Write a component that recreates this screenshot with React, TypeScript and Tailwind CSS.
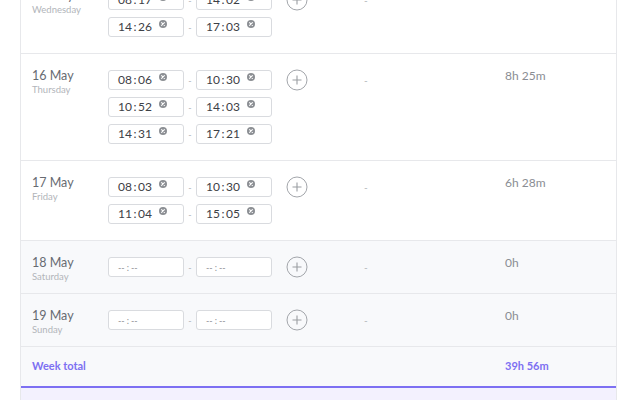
import React from "react";

type Day = {
  date: string;
  day: string;
  times: [string, string][];
  total: string;
  weekend?: boolean;
};

const days: Day[] = [
  { date: "15 May", day: "Wednesday", times: [["08:17", "14:02"], ["14:26", "17:03"]], total: "8h 22m" },
  { date: "16 May", day: "Thursday", times: [["08:06", "10:30"], ["10:52", "14:03"], ["14:31", "17:21"]], total: "8h 25m" },
  { date: "17 May", day: "Friday", times: [["08:03", "10:30"], ["11:04", "15:05"]], total: "6h 28m" },
  { date: "18 May", day: "Saturday", times: [["", ""]], total: "0h", weekend: true },
  { date: "19 May", day: "Sunday", times: [["", ""]], total: "0h", weekend: true },
];

function ClearIcon() {
  return (
    <svg width="8" height="8" viewBox="0 0 8 8" className="-mt-[6px] ml-[7px] shrink-0">
      <circle cx="4" cy="4" r="4" fill="#8c8f94" />
      <path d="M2.6 2.6 L5.4 5.4 M5.4 2.6 L2.6 5.4" stroke="#fff" strokeWidth="1.1" strokeLinecap="round" />
    </svg>
  );
}

function TimeBox({ value }: { value: string }) {
  const [h, m] = value ? value.split(":") : ["--", "--"];
  return (
    <div className="w-[76px] h-5 rounded-[3px] border border-[#d9dbdf] bg-white flex items-center pl-[9px]">
      {value ? (
        <>
          <span className="text-[12px] leading-none text-[#3d4046]">
            {h}
            <span className="mx-[1.5px]">:</span>
            {m}
          </span>
          <ClearIcon />
        </>
      ) : (
        <span className="text-[9px] leading-none text-[#8e9196]">
          {h}
          <span className="mx-[2px]">:</span>
          {m}
        </span>
      )}
    </div>
  );
}

function PlusCircle() {
  return (
    <svg width="22" height="22" viewBox="0 0 22 22" className="shrink-0 -mt-[1px]">
      <circle cx="11" cy="11" r="10" fill="none" stroke="#a3a6ab" strokeWidth="1" />
      <path d="M11 6.5 V15.5 M6.5 11 H15.5" stroke="#9a9da2" strokeWidth="1.1" />
    </svg>
  );
}

function Row({ d }: { d: Day }) {
  return (
    <div
      className={`flex items-start pl-[11px] pt-4 pb-4 border-b border-[#e7e8eb] ${
        d.weekend ? "bg-[#f8f9fb]" : "bg-white"
      }`}
    >
      <div className="w-[76px] h-5">
        <div className="-mt-[2px] text-[12.5px] leading-[15px] text-[#676b72]">{d.date}</div>
        <div className="text-[9.5px] leading-[14px] text-[#b2b5ba]">{d.day}</div>
      </div>
      <div className="flex flex-col gap-[7px] w-[164px]">
        {d.times.map((t, i) => (
          <div key={i} className="flex items-center">
            <TimeBox value={t[0]} />
            <div className="w-3 text-center text-[9px] leading-none text-[#b0b3b8]">-</div>
            <TimeBox value={t[1]} />
          </div>
        ))}
      </div>
      <div className="ml-[14px] h-5">
        <PlusCircle />
      </div>
      <div className="ml-[56px] w-[141px] text-[10px] leading-5 text-[#b0b3b8]">-</div>
      <div className="h-5">
        <div className="-mt-[2px] text-[12px] leading-[15px] text-[#8a8d93]">{d.total}</div>
      </div>
    </div>
  );
}

export default function App() {
  return (
    <div className="w-[640px] h-[400px] overflow-hidden bg-white" style={{ fontFamily: "Lato, 'Open Sans', sans-serif" }}>
      <div className="ml-5 w-[597px] border-l border-r border-[#e7e8eb] -mt-[26px]">
        {days.map((d) => (
          <Row key={d.date} d={d} />
        ))}
        <div className="flex items-center h-[41px] pl-[11px] bg-[#f8f9fb] border-b-2 border-[#7d70f2]">
          <div className="w-[473px] text-[11px] font-bold text-[#7d70f2]">Week total</div>
          <div className="text-[11px] font-bold text-[#7d70f2]">39h 56m</div>
        </div>
        <div className="h-[40px] bg-[#f3f1fe]" />
      </div>
    </div>
  );
}
